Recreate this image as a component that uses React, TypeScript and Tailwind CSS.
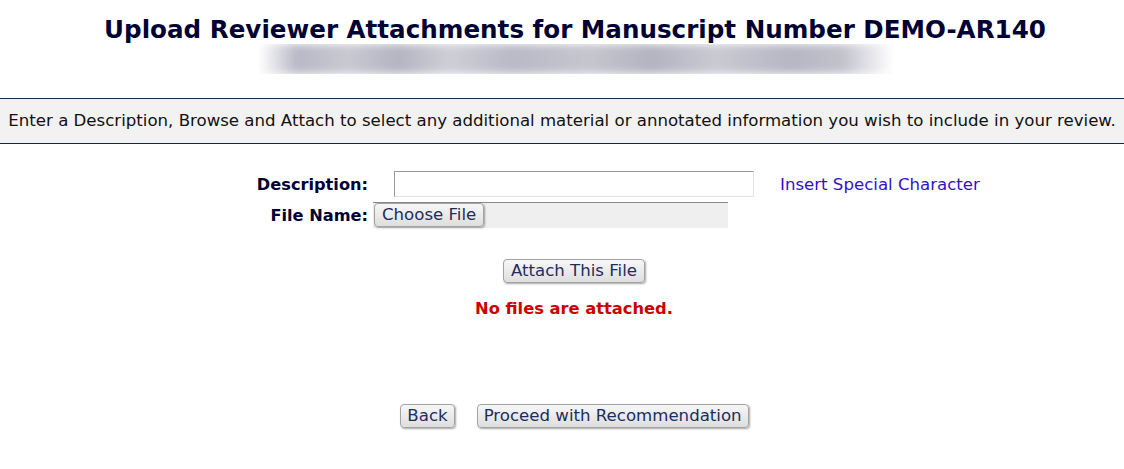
export default function App() {
  const btn =
    "rounded-[4px] border border-[#a3a3a3] bg-gradient-to-b from-[#f7f7f7] to-[#dedede] text-[#1d2d5c] shadow-[1px_1px_2px_rgba(0,0,0,0.35)] leading-none";

  return (
    <div className="w-[1124px] h-[469px] bg-white font-['DejaVu_Sans',Verdana,sans-serif] overflow-hidden">
      {/* Title */}
      <div className="flex flex-col items-center pt-[15px]">
        <h1 className="text-[24.6px] font-bold text-[#000033] leading-[30px] ml-[26px]">
          Upload Reviewer Attachments for Manuscript Number DEMO-AR140
        </h1>
        <div className="mt-[-1px] h-[30px] w-[634px] ml-[28px] overflow-hidden">
          <div className="h-full w-full blur-[4px] bg-[linear-gradient(90deg,#fff_0%,#b8b8c6_6%,#c9c9d3_14%,#b4b4c2_22%,#cfcfd8_30%,#b9b9c7_40%,#c6c6d0_52%,#b3b3c1_62%,#cacad4_72%,#b6b6c4_84%,#c2c2cd_92%,#fff_100%)]" />
        </div>
      </div>

      {/* Instruction bar */}
      <div className="mt-[24px] border-y border-[#0f2a47] bg-[#f2f2f2] h-[46px] flex items-center justify-center">
        <p className="text-[16.6px] text-[#111] whitespace-nowrap">
          Enter a Description, Browse and Attach to select any additional material or annotated information you wish to include in your review.
        </p>
      </div>

      {/* Form */}
      <div className="mt-[27px] grid grid-cols-[368px_1fr] gap-y-[5px] items-start">
        <label className="pt-[4px] leading-[20px] text-right text-[16.2px] font-bold text-[#000033]">Description:</label>
        <div className="flex items-center h-[26px]">
          <input
            type="text"
            className="ml-[26px] w-[360px] h-[26px] border border-t-[#9a9a9a] border-l-[#9a9a9a] border-r-[#e3e3e3] border-b-[#e3e3e3] bg-white"
          />
          <a className="pt-[2px] leading-[20px] ml-[26px] text-[16.6px] text-[#3311cc] cursor-pointer">Insert Special Character</a>
        </div>
        <label className="pt-[4px] leading-[20px] text-right text-[16.2px] font-bold text-[#000033]">File Name:</label>
        <div className="ml-[5px] w-[355px] h-[26px] bg-[#efefef] border-t border-[#8a8a8a] flex items-start">
          <button className={`${btn} h-[24px] px-[7px] text-[16.6px] ml-[1px]`}>Choose File</button>
        </div>
      </div>

      <div className="mt-[31px] flex flex-col items-center">
        <button className={`${btn} h-[24px] px-[7px] text-[16.6px] ml-[24px]`}>Attach This File</button>
        <p className="mt-[14px] text-[16.3px] font-bold text-[#cc0000] ml-[24px]">No files are attached.</p>
      </div>

      <div className="mt-[83px] flex justify-center gap-[22px] ml-[25px]">
        <button className={`${btn} h-[24px] px-[6px] text-[16.6px]`}>Back</button>
        <button className={`${btn} h-[24px] px-[6px] text-[16.6px]`}>Proceed with Recommendation</button>
      </div>
    </div>
  );
}
